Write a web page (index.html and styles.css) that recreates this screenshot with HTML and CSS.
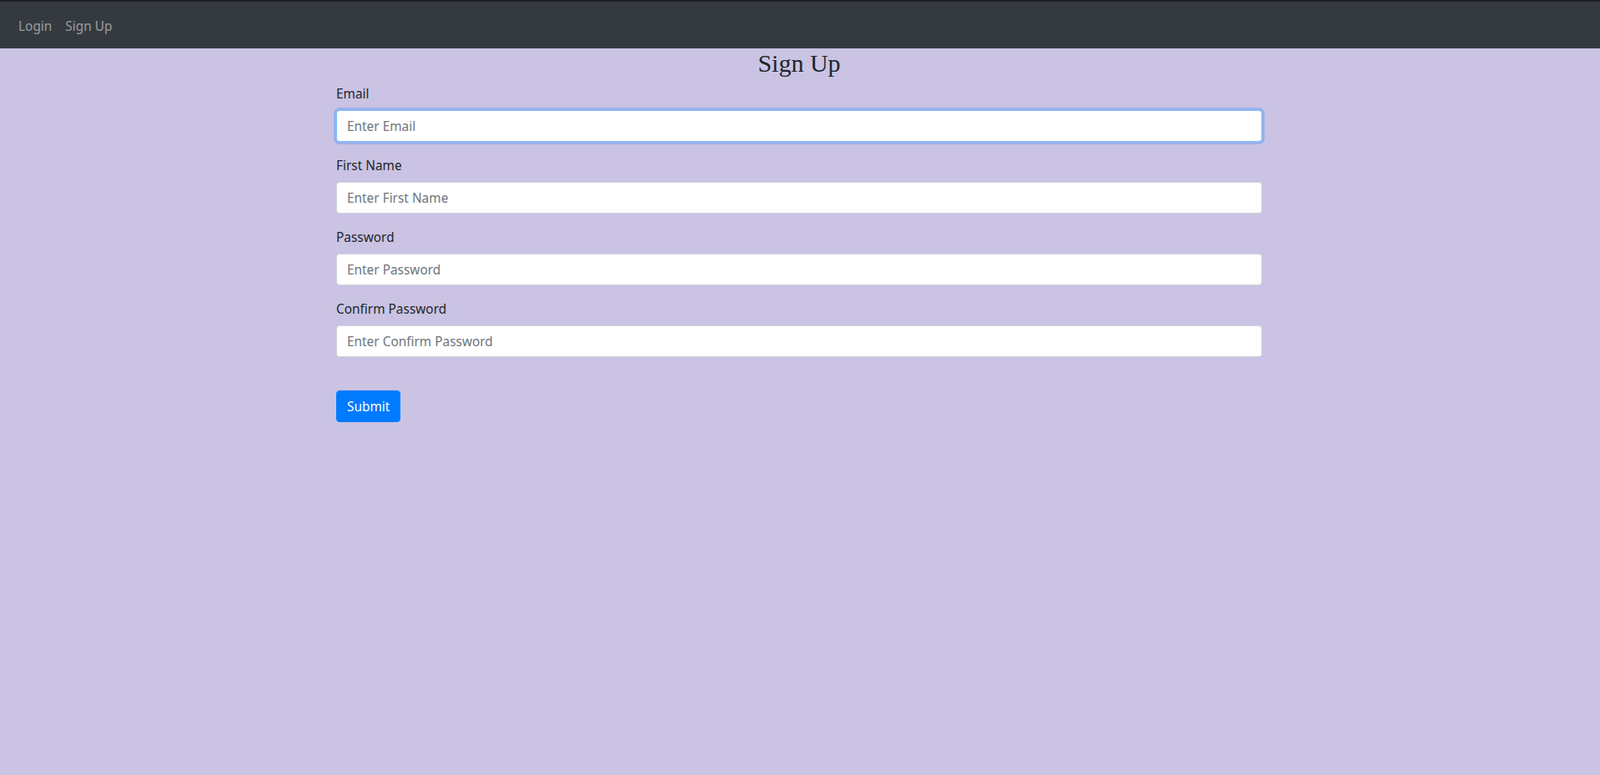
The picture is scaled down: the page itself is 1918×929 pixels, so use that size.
FILE: index.html
```html
<!DOCTYPE html>
<html lang="en">
<head>
    <meta charset="UTF-8">
    <meta name="viewport" content="width=device-width, initial-scale=1.0">
    <title>Sign Up</title>
    <link rel="stylesheet" href="styles.css">
</head>
<body>
    <nav class="navbar">
        <a class="nav-link" href="#">Login</a>
        <a class="nav-link" href="#">Sign Up</a>
    </nav>
    <div class="container">
        <h2 class="title">Sign Up</h2>
        <form class="signup-form">
            <div class="form-group">
                <label for="email">Email</label>
                <input type="email" id="email" class="form-control is-focused" placeholder="Enter Email">
            </div>
            <div class="form-group">
                <label for="first-name">First Name</label>
                <input type="text" id="first-name" class="form-control" placeholder="Enter First Name">
            </div>
            <div class="form-group">
                <label for="password">Password</label>
                <input type="password" id="password" class="form-control" placeholder="Enter Password">
            </div>
            <div class="form-group">
                <label for="confirm-password">Confirm Password</label>
                <input type="password" id="confirm-password" class="form-control" placeholder="Enter Confirm Password">
            </div>
            <button type="submit" class="btn-submit">Submit</button>
        </form>
    </div>
</body>
</html>
```

FILE: styles.css
```css
* {
    box-sizing: border-box;
}
body {
    margin: 0;
    background-color: #cac3e3;
    font-family: 'Noto Sans', 'Open Sans', sans-serif;
    font-size: 15.4px;
    line-height: 24px;
    color: #212529;
}
.navbar {
    display: flex;
    align-items: center;
    padding: 8px 14px;
    background-color: #343a40;
    border-top: 2px solid #1c1f23;
}
.nav-link {
    display: block;
    padding: 10px 8px 6px;
    color: rgba(255, 255, 255, 0.5);
    text-decoration: none;
}
.container {
    max-width: 1140px;
    margin: 0 auto;
    padding: 0 15px;
    position: relative;
    left: -1px;
}
.title {
    margin: 0 0 6px;
    text-align: center;
    font-family: 'Liberation Serif', 'DejaVu Serif', serif;
    font-weight: normal;
    font-size: 30px;
    line-height: 36px;
    color: #212529;
}
.form-group {
    margin-bottom: 16px;
}
.form-group label {
    display: block;
    padding-top: 1px;
    margin-bottom: 7px;
}
.form-control {
    display: block;
    width: 100%;
    height: 38px;
    padding: 6px 12px;
    font-family: inherit;
    font-size: 15.4px;
    color: #495057;
    background-color: #fff;
    border: 1px solid #ced4da;
    border-radius: 4px;
}
.form-control::placeholder {
    color: #6c757d;
}
.form-control.is-focused {
    border-color: #80bdff;
    outline: 0;
    box-shadow: 0 0 0 3px rgba(0, 123, 255, 0.25);
}
.btn-submit {
    margin-top: 24px;
    padding: 7px 12px 5px;
    font-family: inherit;
    font-size: 15.4px;
    line-height: 24px;
    color: #fff;
    background-color: #007bff;
    border: 1px solid #007bff;
    border-radius: 4px;
    cursor: pointer;
}
```
